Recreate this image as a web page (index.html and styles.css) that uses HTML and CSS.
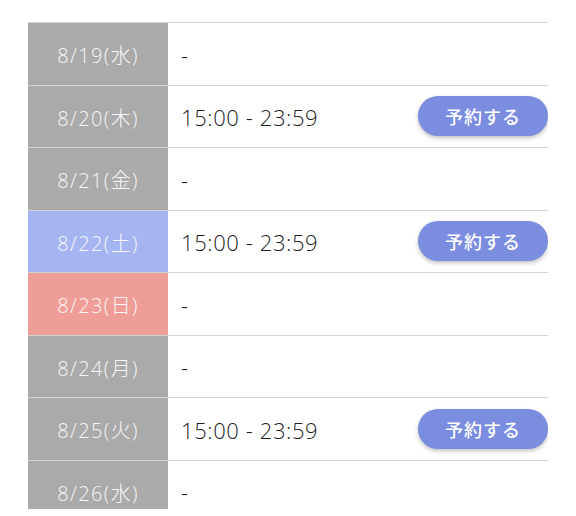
FILE: index.html
```html
<!DOCTYPE html>
<html lang="ja">
<head>
    <meta charset="UTF-8">
    <meta name="viewport" content="width=device-width, initial-scale=1.0">
    <title>予約カレンダー</title>
    <link rel="stylesheet" href="styles.css">
</head>
<body>
    <div class="schedule">
        <div class="row">
            <div class="date">8/19(水)</div>
            <div class="slot"><span class="time">-</span></div>
        </div>
        <div class="row">
            <div class="date">8/20(木)</div>
            <div class="slot"><span class="time">15:00 - 23:59</span><button class="reserve">予約する</button></div>
        </div>
        <div class="row">
            <div class="date">8/21(金)</div>
            <div class="slot"><span class="time">-</span></div>
        </div>
        <div class="row">
            <div class="date sat">8/22(土)</div>
            <div class="slot"><span class="time">15:00 - 23:59</span><button class="reserve">予約する</button></div>
        </div>
        <div class="row">
            <div class="date sun">8/23(日)</div>
            <div class="slot"><span class="time">-</span></div>
        </div>
        <div class="row">
            <div class="date">8/24(月)</div>
            <div class="slot"><span class="time">-</span></div>
        </div>
        <div class="row">
            <div class="date">8/25(火)</div>
            <div class="slot"><span class="time">15:00 - 23:59</span><button class="reserve">予約する</button></div>
        </div>
        <div class="row">
            <div class="date">8/26(水)</div>
            <div class="slot"><span class="time">-</span></div>
        </div>
    </div>
</body>
</html>
```

FILE: styles.css
```css
body, html {
    margin: 0;
    padding: 0;
    background-color: #ffffff;
    font-family: "Open Sans", "Noto Sans CJK JP", sans-serif;
}
.schedule {
    margin: 22px 0 0 28px;
    width: 520px;
    height: 487px;
    overflow: hidden;
}
.row {
    display: grid;
    grid-template-columns: 140px 1fr;
    height: 61.5px;
    border-top: 1px solid #d4d4d4;
}
.date {
    display: flex;
    align-items: center;
    justify-content: center;
    padding-top: 2px;
    background-color: #aaaaaa;
    color: #f6f6f6;
    font-size: 20px;
    font-weight: 300;
    letter-spacing: 1.4px;
}
.date.sat {
    background-color: #a5b5f1;
}
.date.sun {
    background-color: #ef9e97;
}
.slot {
    display: flex;
    align-items: center;
    justify-content: space-between;
    padding-left: 13px;
    padding-top: 2px;
}
.time {
    color: #1e1e1e;
    font-size: 22px;
    font-weight: 300;
    letter-spacing: 0.6px;
}
.reserve {
    width: 130px;
    height: 40px;
    margin-bottom: 2px;
    border: none;
    border-radius: 20px;
    background-color: #7b8ddf;
    color: #ffffff;
    font-family: "Noto Sans CJK JP", sans-serif;
    font-size: 18px;
    font-weight: 500;
    letter-spacing: 1px;
    box-shadow: 0 2px 4px rgba(0,0,0,0.25);
    cursor: pointer;
}
```
